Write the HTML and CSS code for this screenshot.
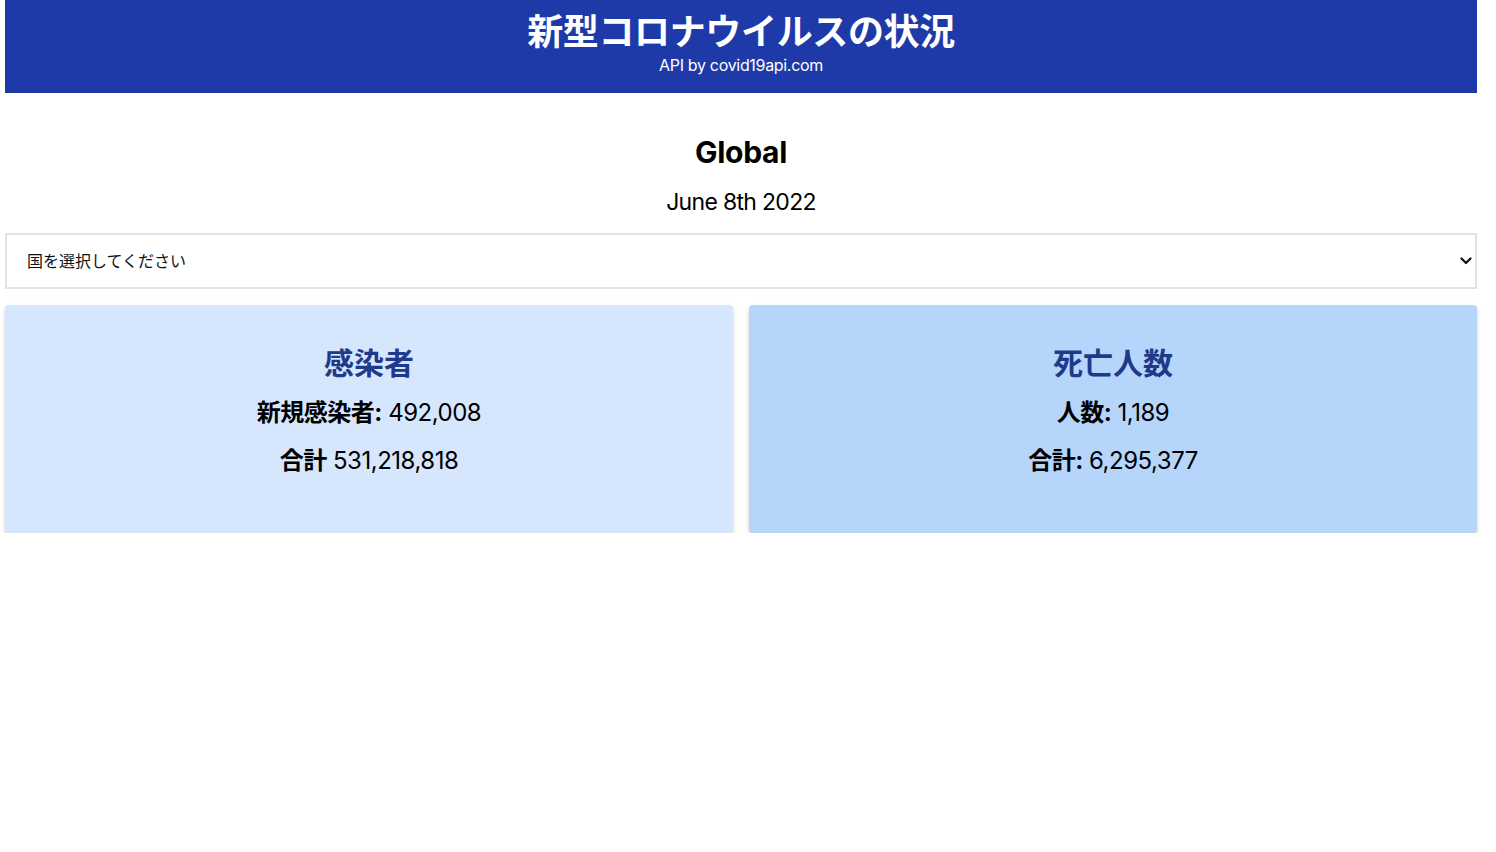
FILE: index.html
```html
<!DOCTYPE html>
<html lang="ja">
<head>
<meta charset="utf-8">
<title>新型コロナウイルスの状況</title>
<link rel="stylesheet" href="styles.css">
</head>
<body>
<div class="page">
  <header class="header">
    <h1 class="header-title">新型コロナウイルスの状況</h1>
    <p class="header-sub">API by covid19api.com</p>
  </header>
  <main class="main">
    <h2 class="region">Global</h2>
    <p class="date">June 8th 2022</p>
    <div class="select-wrap">
      <select class="select">
        <option>国を選択してください</option>
      </select>
      <svg class="chevron" width="12" height="8" viewBox="0 0 12 8"><path d="M1.5 1.5 L6 6 L10.5 1.5" fill="none" stroke="#111" stroke-width="2.2" stroke-linecap="round" stroke-linejoin="round"/></svg>
    </div>
    <div class="cards">
      <section class="card card-confirmed">
        <h3 class="card-title">感染者</h3>
        <p class="card-line"><strong>新規感染者:</strong> 492,008</p>
        <p class="card-line"><strong>合計</strong> 531,218,818</p>
      </section>
      <section class="card card-deaths">
        <h3 class="card-title">死亡人数</h3>
        <p class="card-line"><strong>人数:</strong> 1,189</p>
        <p class="card-line"><strong>合計:</strong> 6,295,377</p>
      </section>
    </div>
  </main>
</div>
</body>
</html>
```
FILE: styles.css
```css
* { box-sizing: border-box; }
html, body { margin: 0; padding: 0; background: #fff; }
body {
  font-family: Inter, "Noto Sans CJK JP", sans-serif;
  color: #000;
}
.page {
  width: 1472px;
  margin-left: 5px;
}
.header {
  background: #1e3aa8;
  color: #fff;
  text-align: center;
  padding: 12px 0 18px;
}
.header-title {
  margin: 0;
  font-size: 36px;
  line-height: 40px;
  font-weight: 700;
  letter-spacing: -0.01em;
}
.header-sub {
  margin: 3px 0 0;
  font-size: 16px;
  line-height: 20px;
  letter-spacing: -0.02em;
}
.main {
  padding-top: 41px;
  text-align: center;
}
.region {
  margin: 0;
  font-size: 30px;
  line-height: 36px;
  font-weight: 700;
  letter-spacing: -0.01em;
}
.date {
  margin: 16px 0 0;
  font-size: 23px;
  line-height: 32px;
  letter-spacing: -0.03em;
}
.select-wrap {
  position: relative;
  margin-top: 15px;
}
.select {
  display: block;
  width: 100%;
  height: 56px;
  appearance: none;
  -webkit-appearance: none;
  background: #fff;
  border: 2px solid #e2e2e6;
  border-radius: 0;
  padding: 0 20px;
  font-family: Inter, "Noto Sans CJK JP", sans-serif;
  font-size: 16px;
  color: #111;
  text-align: left;
}
.chevron {
  position: absolute;
  right: 5px;
  top: 24px;
  pointer-events: none;
}
.cards {
  display: grid;
  grid-template-columns: 1fr 1fr;
  gap: 16px;
  margin-top: 16px;
}
.card {
  border-radius: 4px;
  padding: 40px 16px 56px;
  box-shadow: 0 3px 5px rgba(0,0,0,0.14), 0 1px 2px rgba(0,0,0,0.08);
}
.card-confirmed { background: #d6e6fc; }
.card-deaths { background: #b5d5fb; }
.card-title {
  margin: 0;
  font-size: 30px;
  line-height: 36px;
  font-weight: 700;
  color: #1e3a8a;
}
.card-line {
  margin: 16px 0 0;
  font-size: 24px;
  line-height: 32px;
  letter-spacing: -0.02em;
}
.card-line strong { font-weight: 700; }
```
